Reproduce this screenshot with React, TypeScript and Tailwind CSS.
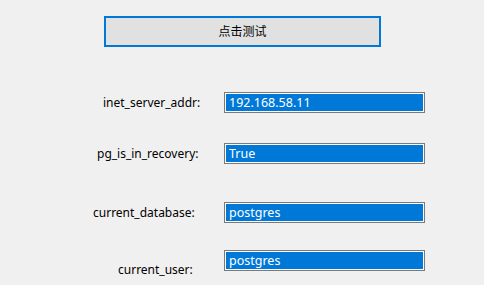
const ROWS = [
  { label: "inet_server_addr:", value: "192.168.58.11", pad: "pl-[103px]", mt: "mt-[45px]", lab: "" },
  { label: "pg_is_in_recovery:", value: "True", pad: "pl-[97px]", mt: "mt-[30px]", lab: "" },
  { label: "current_database:", value: "postgres", pad: "pl-[93px]", mt: "mt-[38px]", lab: "" },
  { label: "current_user:", value: "postgres", pad: "pl-[118px]", mt: "mt-[27px]", lab: "translate-y-[9px]" },
];

function ValueBox({ value }: { value: string }) {
  return (
    <div className="w-[201px] h-[21px] border border-[#7a7a7a] bg-white p-px">
      <div className="h-full bg-[#0078d7] text-white text-[12.5px] leading-[17px] pl-[3px]">{value}</div>
    </div>
  );
}

export default function App() {
  return (
    <div
      className="w-[484px] h-[285px] bg-[#f0f0f0] overflow-hidden text-[#000] pt-[16px]"
      style={{ fontFamily: '"Noto Sans", "Noto Sans CJK SC", sans-serif' }}
    >
      <button className="ml-[104px] w-[277px] h-[31px] border-2 border-[#0078d7] bg-[#e1e1e1] text-[12px] flex items-center justify-center">
        点击测试
      </button>

      {ROWS.map((row) => (
        <div key={row.label} className={`flex items-center ${row.mt}`}>
          <div className={`w-[224px] text-[12px] ${row.pad} ${row.lab}`}>{row.label}</div>
          <ValueBox value={row.value} />
        </div>
      ))}
    </div>
  );
}
